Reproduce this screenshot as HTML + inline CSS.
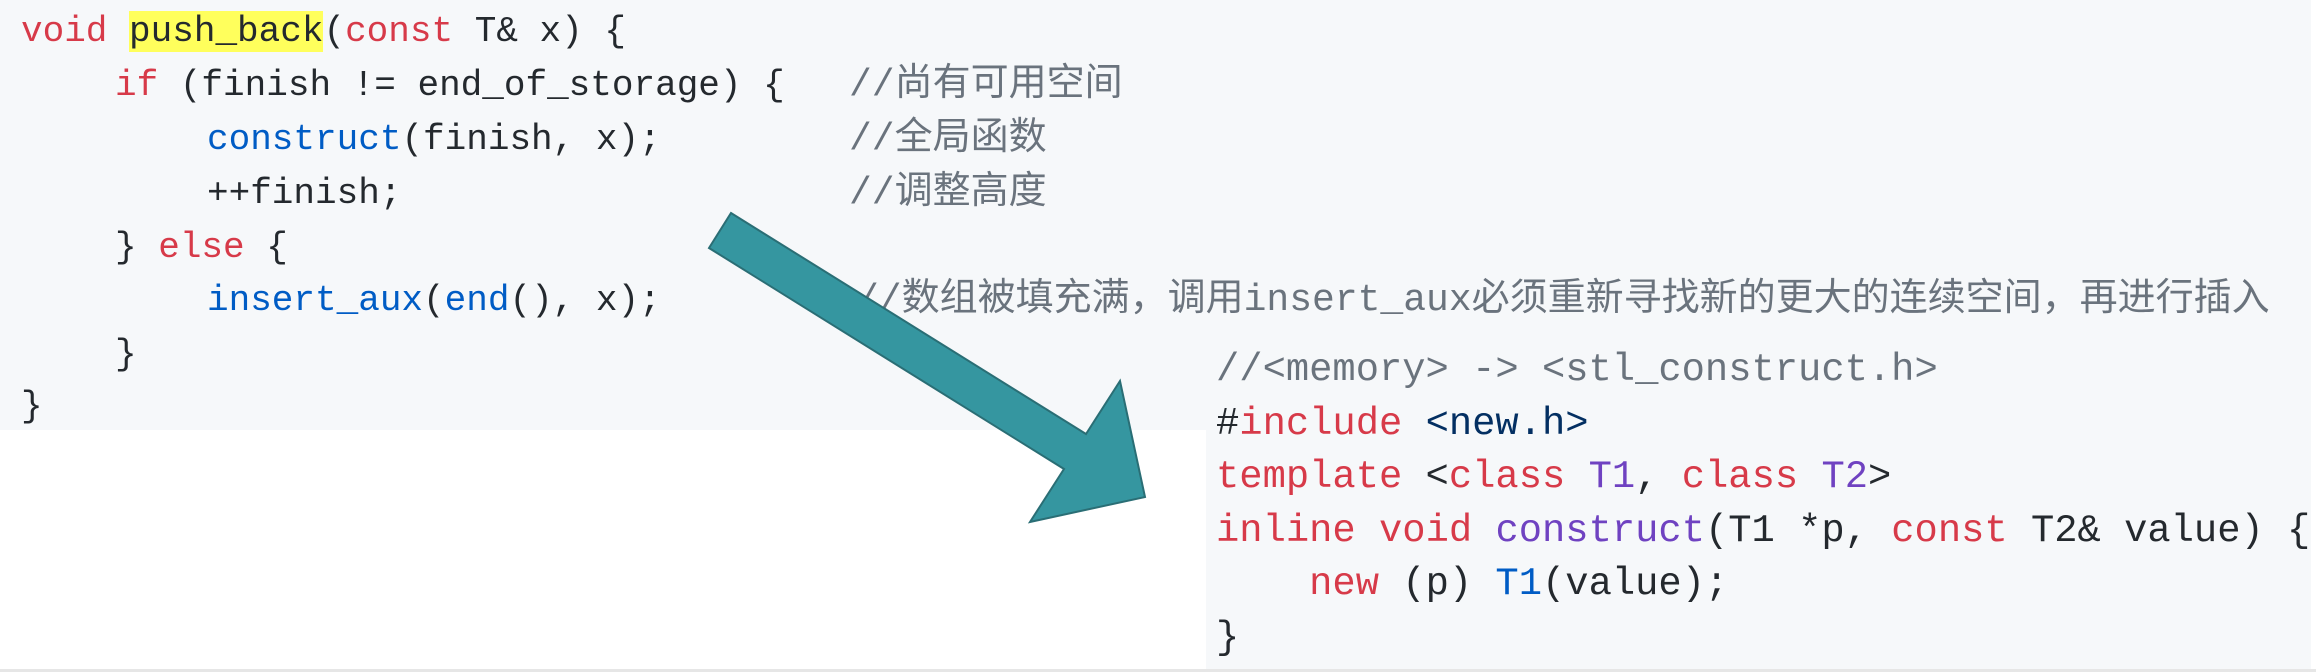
<!DOCTYPE html>
<html><head><meta charset="utf-8"><style>
html,body{margin:0;padding:0;background:#fff;width:2316px;height:672px;overflow:hidden;position:relative}
.bg{position:absolute;background:#f6f8fa}
pre,.l{position:absolute;margin:0;font-family:"Liberation Mono","Noto Sans CJK SC",monospace;font-size:36px;line-height:53.8px;color:#24292e;white-space:pre}
.k{color:#d73a49}.f{color:#005cc5}.p{color:#6f42c1}.c{color:#6a737d}.s{color:#032f62}
.cm{font-size:38px;color:#6a737d}
.hl{background:#ffff5c}
</style></head><body>
<div class="bg" style="left:0;top:0;width:2311px;height:430px"></div>
<div class="bg" style="left:1206px;top:340px;width:1105px;height:329px"></div>
<div style="position:absolute;left:0;top:669px;width:2316px;height:3px;background:#e6e6e6"></div>

<div class="l" style="left:21px;top:5px"><span class="k">void</span> <span class="hl">push_back</span>(<span class="k">const</span> T&amp; x) {</div>
<div class="l" style="left:115px;top:59px"><span class="k">if</span> (finish != end_of_storage) {</div>
<div class="l cm" style="left:849px;top:59px">//尚有可用空间</div>
<div class="l" style="left:207px;top:113px"><span class="f">construct</span>(finish, x);</div>
<div class="l cm" style="left:849px;top:113px">//全局函数</div>
<div class="l" style="left:207px;top:167px">++finish;</div>
<div class="l cm" style="left:849px;top:167px">//调整高度</div>
<div class="l" style="left:115px;top:221px">} <span class="k">else</span> {</div>
<div class="l" style="left:207px;top:274px"><span class="f">insert_aux</span>(<span class="f">end</span>(), x);</div>
<div class="l cm" style="left:856px;top:274px">//数组被填充满，调用insert_aux必须重新寻找新的更大的连续空间，再进行插入</div>
<div class="l" style="left:115px;top:328px">}</div>
<div class="l" style="left:21px;top:380px">}</div>

<pre style="left:1216px;top:344px;line-height:53.5px;font-size:38.8px"><span class="c">//&lt;memory&gt; -&gt; &lt;stl_construct.h&gt;</span>
#<span class="k">include</span> <span class="s">&lt;new.h&gt;</span>
<span class="k">template</span> &lt;<span class="k">class</span> <span class="p">T1</span>, <span class="k">class</span> <span class="p">T2</span>&gt;
<span class="k">inline</span> <span class="k">void</span> <span class="p">construct</span>(T1 *p, <span class="k">const</span> T2&amp; value) {
    <span class="k">new</span> (p) <span class="f">T1</span>(value);
}</pre>
<svg style="position:absolute;left:0;top:0" width="2316" height="672">
<polygon points="731,213 1086,434 1120,381 1145,497 1030,522 1064,469 709,248" fill="#3596a0" stroke="#2a6e75" stroke-width="2"/>
</svg>
</body></html>
